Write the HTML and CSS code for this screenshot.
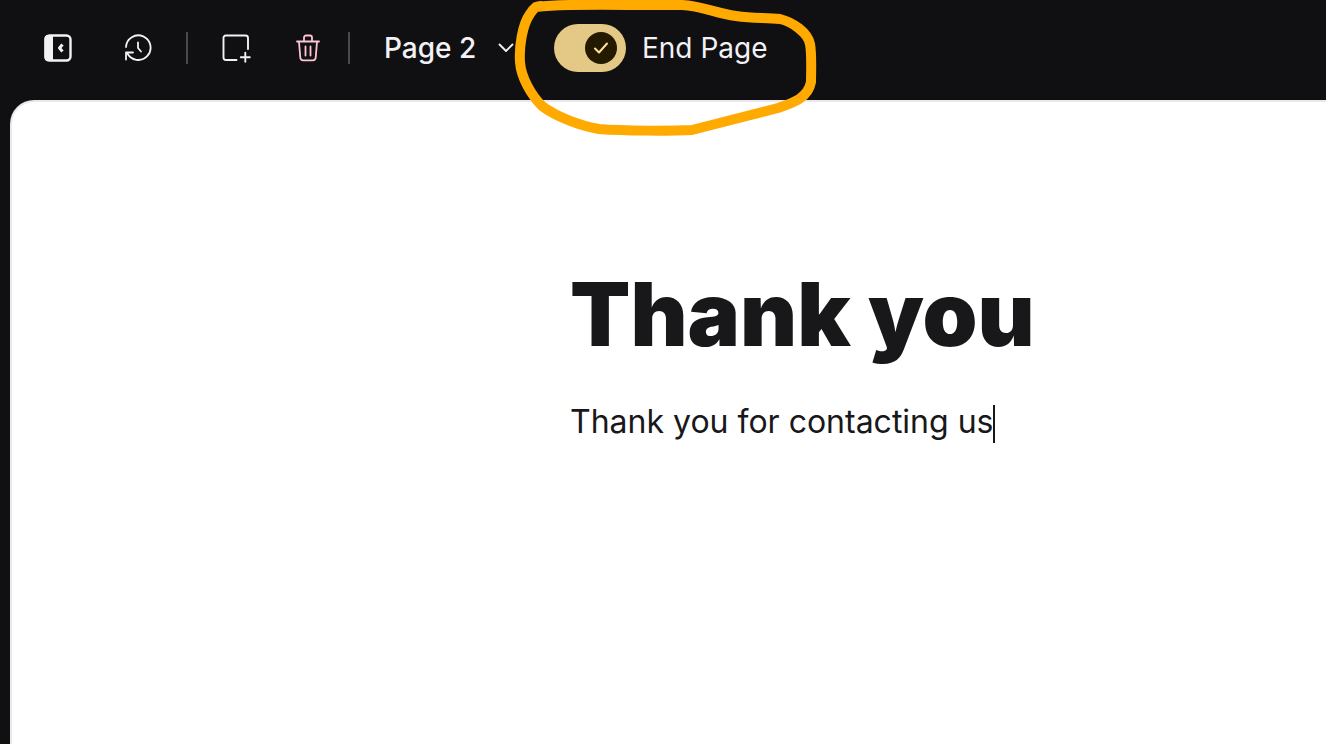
FILE: index.html
```html
<!DOCTYPE html>
<html lang="en">
  <head>
    <meta charset="UTF-8" />
    <meta name="viewport" content="width=device-width, initial-scale=1.0" />
    <title>Form Editor</title>
    <link rel="stylesheet" href="styles.css">
  </head>
  <body>
    <header class="toolbar">
      <button class="icon-btn collapse" type="button" aria-label="Collapse sidebar">
        <svg width="28" height="28" viewBox="0 0 28 28" fill="none">
          <rect x="1.5" y="1.5" width="25" height="25" rx="4" stroke="#f3f1f5" stroke-width="2.4" />
          <path d="M4 1h5v26H4a3.500 3.500 0 0 1-3.500-3.500v-19A3.500 3.500 0 0 1 4 1z" fill="#f3f1f5" />
          <path d="M18.500 10.500L15.500 14l3 3.500" stroke="#f3f1f5" stroke-width="3" stroke-linejoin="round" />
        </svg>
      </button>
      <button class="icon-btn history" type="button" aria-label="History">
        <svg width="28" height="28" viewBox="0 0 28 28" fill="none" stroke="#f3f1f5" stroke-width="1.800" stroke-linecap="round" stroke-linejoin="round">
          <path d="M2 13A12.300 12.300 0 1 1 3.200 19" />
          <path d="M2 25.500V18.500h7" />
          <path d="M14 8.500v5.500l3 3.500" />
        </svg>
      </button>
      <span class="divider"></span>
      <button class="icon-btn add" type="button" aria-label="Add page">
        <svg width="32" height="32" viewBox="0 0 32 32" fill="none" stroke="#f3f1f5" stroke-width="1.900" stroke-linecap="round">
          <path d="M16.500 28H6a2.500 2.500 0 0 1-2.500-2.500v-19A2.500 2.500 0 0 1 6 3.500h19.500A2.500 2.500 0 0 1 28 6v11" />
          <path d="M25.300 20.800v9M20.800 25.300h9" />
        </svg>
      </button>
      <button class="icon-btn trash" type="button" aria-label="Delete page">
        <svg width="28" height="28" viewBox="0 0 28 28" fill="none" stroke="#ffc4d3" stroke-width="1.800" stroke-linecap="round" stroke-linejoin="round">
          <path d="M3 7.500h22" />
          <path d="M10 7V3.500A2 2 0 0 1 12 1.500h4a2 2 0 0 1 2 2V7" />
          <path d="M5 8l1.300 15.500a3 3 0 0 0 3 2.800h9.400a3 3 0 0 0 3-2.800L23 8" />
          <path d="M11.500 12.500v9M16.500 12.500v9" />
        </svg>
      </button>
      <span class="divider"></span>

      <div class="page-picker">
        <select class="page-select" aria-label="Page">
          <option>Page 1</option>
          <option selected>Page 2</option>
        </select>
        <svg class="chevron" width="16" height="10" viewBox="0 0 16 10" fill="none" stroke="#f3f1f5" stroke-width="1.800" stroke-linecap="round" stroke-linejoin="round">
          <path d="M1.500 1.500L8 8l6.500-6.500" />
        </svg>
      </div>

      <div class="end-page">
        <span class="switch">
          <input class="switch-input" type="checkbox" id="end-page" checked />
          <svg class="switch-knob" width="32" height="32" viewBox="0 0 32 32" fill="none">
            <circle cx="16" cy="16" r="16" fill="#241a00" />
            <path d="M10 16.500l4 4 8-9" stroke="#ffdf9a" stroke-width="2" stroke-linecap="round" stroke-linejoin="round" />
          </svg>
        </span>
        <label class="end-label" for="end-page">End Page</label>

        <!-- hand drawn highlight -->
        <svg class="highlight" width="310" height="146" viewBox="510 -4 310 146" fill="none" stroke="#ffaa00" stroke-width="10" stroke-linecap="round" stroke-linejoin="round">
          <path d="M536 7C560 4 590 5 682 5C702 6 715 13 736 16C755 19 766 17 780 19C793 22 808 33 810 44C812 55 811 72 811 82C808 98 793 103 778 108C750 115 720 123 692 130C670 131 625 131 599 129C580 126 555 116 542 106C532 96 521 78 520 62C519 48 522 25 530 14C533 9 536 6 540 6" />
        </svg>
      </div>
    </header>

    <main class="sheet">
      <article class="content" contenteditable="true" spellcheck="false">
        <h1 class="title">Thank you</h1>
        <p class="message">Thank you for contacting us<span class="caret"></span></p>
      </article>
    </main>
  </body>
</html>
```
FILE: styles.css
```css
* {
  box-sizing: border-box;
}

body {
  margin: 0;
  min-height: 100vh;
  display: flex;
  flex-direction: column;
  background: #101012;
  color: #f3f1f5;
  font-family: Inter, "Open Sans", sans-serif;
  overflow: hidden;
}

.toolbar {
  display: flex;
  align-items: center;
  height: 96px;
  padding-left: 42px;
  flex-shrink: 0;
}

.icon-btn {
  display: flex;
  align-items: center;
  justify-content: center;
  width: 32px;
  height: 32px;
  padding: 0;
  border: 0;
  background: none;
  cursor: pointer;
}

.history {
  margin: 0 32px 0 48px;
}

.divider {
  width: 2px;
  height: 32px;
  background: #4a4a4d;
}

.add {
  margin: 0 40px 0 32px;
}

.trash {
  margin-right: 24px;
}

.page-picker {
  display: flex;
  align-items: center;
  position: relative;
  margin-left: 34px;
}

.page-select {
  appearance: none;
  width: 132px;
  height: 40px;
  padding: 0;
  border: 0;
  background: none;
  color: inherit;
  font-family: inherit;
  font-size: 28px;
  font-weight: 500;
  cursor: pointer;
}

.page-select option {
  color: #101012;
}

.chevron {
  position: absolute;
  right: 2px;
  pointer-events: none;
}

.end-page {
  display: flex;
  align-items: center;
  gap: 16px;
  position: relative;
  margin-left: 38px;
}

.switch {
  display: flex;
  position: relative;
}

.switch-input {
  appearance: none;
  width: 72px;
  height: 48px;
  margin: 0;
  border-radius: 24px;
  background: #e3c886;
  cursor: pointer;
}

.switch-knob {
  position: absolute;
  top: 8px;
  right: 9px;
  pointer-events: none;
}

.end-label {
  font-size: 28px;
  line-height: 32px;
}

.highlight {
  position: absolute;
  top: -28px;
  left: -44px;
  z-index: 1;
  pointer-events: none;
}

.sheet {
  flex: 1;
  display: grid;
  grid-template-columns: minmax(0, 558px) 1fr;
  margin: 4px 0 0 10px;
  padding-top: 164px;
  border-top: 2px solid #ebe8ec;
  border-left: 2px solid #ebe8ec;
  border-top-left-radius: 24px;
  background: #fff;
  color: #18181a;
}

.content {
  grid-column: 2;
  outline: none;
}

.title {
  margin: 0;
  font-size: 88px;
  line-height: 96px;
  font-weight: 900;
}

.message {
  margin: 40px 0 0;
  font-size: 32px;
  line-height: 40px;
}

.caret {
  display: inline-block;
  width: 2px;
  height: 38px;
  background: #18181a;
  vertical-align: middle;
}
```
